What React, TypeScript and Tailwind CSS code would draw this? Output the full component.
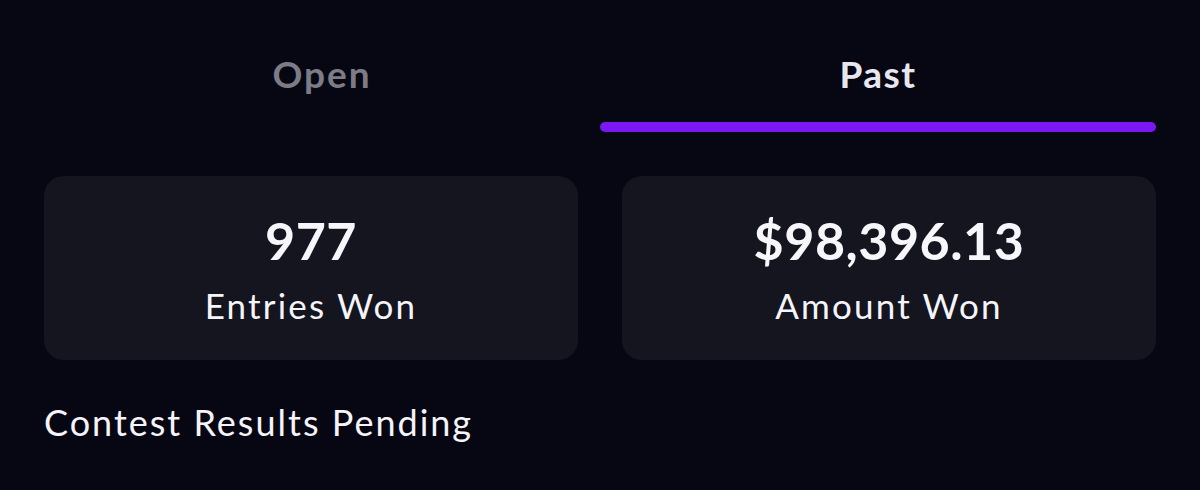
import React from 'react';

const font = { fontFamily: 'Lato, "Noto Sans", sans-serif' };

interface StatCardProps {
  value: string;
  label: string;
}

function StatCard({ value, label }: StatCardProps) {
  return (
    <div className="flex-1 h-[184px] rounded-[20px] bg-[#14151f] flex flex-col items-center justify-center">
      <div className="text-[52px] leading-none font-bold tracking-[0.5px] text-[#f7f6fb]">{value}</div>
      <div className="mt-[22px] text-[35px] leading-none tracking-[2.2px] text-[#f5f4fa]">{label}</div>
    </div>
  );
}

export default function App() {
  return (
    <div className="w-[1200px] h-[490px] overflow-hidden bg-[#060713] px-[44px]" style={font}>
      <div className="flex">
        <button className="flex-1 h-[136px] flex flex-col items-center">
          <span className="mt-[55px] text-[37px] leading-none font-bold tracking-[2px] text-[#7c7c86]">Open</span>
        </button>
        <button className="flex-1 h-[136px] flex flex-col items-center">
          <span className="mt-[55px] text-[37px] leading-none font-bold tracking-[1.5px] text-[#e8e7ef]">Past</span>
          <span className="mt-auto mb-[4px] h-[10px] w-full rounded-full bg-[#7a17f2]" />
        </button>
      </div>

      <div className="mt-[40px] flex gap-[44px]">
        <StatCard value="977" label="Entries Won" />
        <StatCard value="$98,396.13" label="Amount Won" />
      </div>

      <h3 className="mt-[44px] text-[36px] leading-none tracking-[2px] text-[#f5f4fa]">Contest Results Pending</h3>
    </div>
  );
}
